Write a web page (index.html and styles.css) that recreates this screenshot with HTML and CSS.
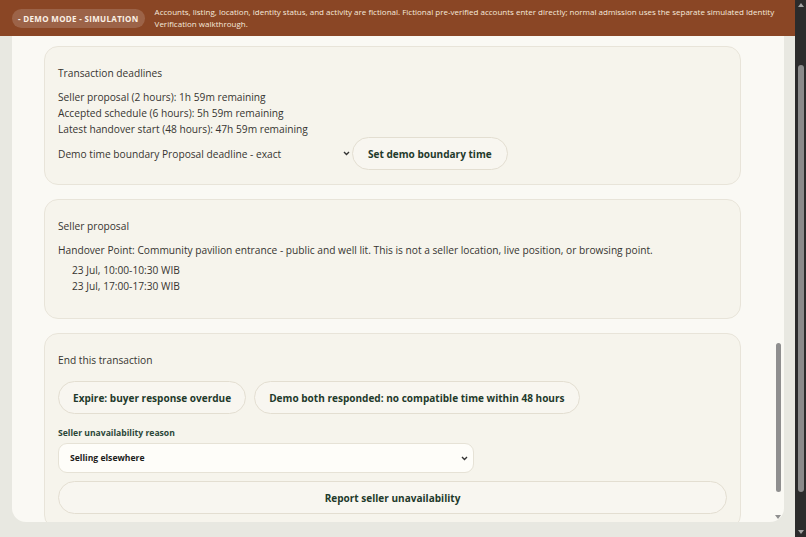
FILE: index.html
```html
<!DOCTYPE html>
<html lang="en">
<head>
    <meta charset="UTF-8">
    <meta name="viewport" content="width=device-width, initial-scale=1.0">
    <title>Transaction - Demo</title>
    <link rel="stylesheet" href="styles.css">
</head>
<body>

    <div class="page">
        <header class="demo-banner">
            <span class="demo-pill">- Demo mode - Simulation</span>
            <p class="demo-note">Accounts, listing, location, identity status, and activity are fictional. Fictional pre-verified accounts enter directly; normal admission uses the separate simulated Identity Verification walkthrough.</p>
        </header>

        <div class="stage">
            <main class="panel">
                <div class="panel-body">

                    <section class="card">
                        <h3 class="card-title">Transaction deadlines</h3>
                        <ul class="deadlines">
                            <li>Seller proposal (2 hours): 1h 59m remaining</li>
                            <li>Accepted schedule (6 hours): 5h 59m remaining</li>
                            <li>Latest handover start (48 hours): 47h 59m remaining</li>
                        </ul>
                        <div class="boundary-row">
                            <label class="boundary-label">Demo time boundary
                                <span class="select-wrap plain">
                                    <select class="boundary-select">
                                        <option>Proposal deadline - exact</option>
                                        <option>Proposal deadline - after</option>
                                    </select>
                                    <svg class="chevron" width="7" height="5" viewBox="0 0 7 5"><path d="M1 1l2.5 2.5L6 1" fill="none" stroke="#333" stroke-width="1.4"/></svg>
                                </span>
                            </label>
                            <button class="btn">Set demo boundary time</button>
                        </div>
                    </section>

                    <section class="card card-proposal">
                        <h3 class="card-title">Seller proposal</h3>
                        <p class="handover">Handover Point: Community pavilion entrance - public and well lit. This is not a seller location, live position, or browsing point.</p>
                        <ul class="slots">
                            <li>23 Jul, 10:00-10:30 WIB</li>
                            <li>23 Jul, 17:00-17:30 WIB</li>
                        </ul>
                    </section>

                    <section class="card">
                        <h3 class="card-title title-end">End this transaction</h3>
                        <div class="actions">
                            <button class="btn">Expire: buyer response overdue</button>
                            <button class="btn">Demo both responded: no compatible time within 48 hours</button>
                        </div>
                        <label class="field-label" for="reason">Seller unavailability reason</label>
                        <span class="select-wrap boxed">
                            <select id="reason" class="reason-select">
                                <option>Selling elsewhere</option>
                                <option>Item no longer available</option>
                            </select>
                            <svg class="chevron" width="7" height="5" viewBox="0 0 7 5"><path d="M1 1l2.5 2.5L6 1" fill="none" stroke="#333" stroke-width="1.4"/></svg>
                        </span>
                        <button class="btn btn-wide">Report seller unavailability</button>
                    </section>

                </div>
                <div class="inner-scroll">
                    <div class="inner-thumb"></div>
                    <span class="arrow-down light"></span>
                </div>
            </main>
        </div>
    </div>

    <div class="outer-scroll">
        <span class="arrow-up"></span>
        <div class="outer-thumb"></div>
        <span class="arrow-down"></span>
    </div>

</body>
</html>
```

FILE: styles.css
```css
* {
    margin: 0;
    padding: 0;
    box-sizing: border-box;
}

body, html {
    width: 100%;
    height: 100%;
    overflow: hidden;
}

body {
    display: flex;
    font-family: 'Open Sans', 'Noto Sans', sans-serif;
    font-size: 10.2px;
    line-height: 16px;
    color: #363531;
    background: #e8e8e1;
}

.page {
    flex: 1;
    display: flex;
    flex-direction: column;
    min-width: 0;
}

/* demo banner */
.demo-banner {
    height: 36px;
    flex-shrink: 0;
    display: flex;
    align-items: center;
    gap: 10px;
    padding: 0 14px 0 12px;
    background: #8a4625;
    color: #f6e9dc;
}

.demo-pill {
    flex-shrink: 0;
    padding: 3px 6px;
    border-radius: 999px;
    background: rgba(255, 255, 255, 0.16);
    font-size: 8px;
    line-height: 13px;
    font-weight: 700;
    letter-spacing: 0.04em;
    text-transform: uppercase;
    color: #fbf1e6;
}

.demo-note {
    font-size: 8px;
    line-height: 12px;
}

/* panel */
.stage {
    flex: 1;
    display: flex;
    padding: 0 11px 15px 12px;
    min-height: 0;
}

.panel {
    flex: 1;
    display: flex;
    overflow: hidden;
    background: #faf9f4;
    border-radius: 0 0 14px 14px;
}

.panel-body {
    flex: 1;
    display: flex;
    flex-direction: column;
    gap: 14px;
    padding: 10px 31px 0 32px;
    min-width: 0;
}

.card {
    flex-shrink: 0;
    padding: 18px 13px 14px;
    background: #f6f4ec;
    border: 1px solid #e8e4d9;
    border-radius: 14px;
}

.card-title {
    font-size: 10.2px;
    font-weight: 400;
    margin-bottom: 8px;
}

.title-end {
    margin-bottom: 13px;
}

ul {
    list-style: none;
}

.boundary-row {
    display: flex;
    align-items: center;
}

.select-wrap {
    position: relative;
    display: inline-flex;
    align-items: center;
}

.select-wrap select {
    appearance: none;
    border: none;
    background: transparent;
    font: inherit;
    color: inherit;
    outline: none;
}

.select-wrap .chevron {
    position: absolute;
    right: 6px;
    pointer-events: none;
}

.boundary-select {
    width: 189px;
    padding: 0 12px 0 0;
}

.plain .chevron {
    right: 1px;
}

.btn {
    height: 33px;
    padding: 0 14px;
    border: 1px solid #e3ded1;
    border-radius: 999px;
    background: #f8f6f0;
    font-family: inherit;
    font-size: 10.05px;
    font-weight: 700;
    color: #1f3a2b;
}

.boundary-row .btn {
    margin-left: 1px;
    padding: 0 15px;
}

.card-proposal {
    padding-bottom: 24px;
}

.handover {
    margin-bottom: 4px;
}

.slots {
    padding-left: 14px;
}

.actions {
    display: flex;
    gap: 8px;
}

.field-label {
    display: block;
    margin-top: 12px;
    font-size: 8.6px;
    line-height: 14px;
    font-weight: 700;
    color: #2c4738;
}

.boxed {
    display: flex;
    width: 416px;
    margin-top: 3px;
}

.reason-select {
    width: 100%;
    height: 30px;
    padding: 0 11px;
    border: 1px solid #e6e2d6 !important;
    border-radius: 9px;
    background: #fefdf9 !important;
    font-size: 8.6px !important;
    font-weight: 700 !important;
    color: #1c1c1a !important;
}

.btn-wide {
    display: block;
    width: 100%;
    margin-top: 8px;
}

/* scrollbars */
.inner-scroll {
    width: 12px;
    flex-shrink: 0;
    display: flex;
    flex-direction: column;
    align-items: center;
    padding-bottom: 3px;
}

.inner-thumb {
    width: 5px;
    height: 149px;
    margin-top: 307px;
    border-radius: 3px;
    background: #8f8f8f;
}

.inner-scroll .arrow-down {
    margin-top: auto;
}

.outer-scroll {
    width: 11px;
    flex-shrink: 0;
    display: flex;
    flex-direction: column;
    align-items: center;
    padding: 3px 0;
    background: #2b2b2b;
}

.outer-thumb {
    width: 6px;
    height: 427px;
    margin-top: 58px;
    border-radius: 3px;
    background: #8a8a8a;
}

.outer-scroll .arrow-down {
    margin-top: auto;
}

.arrow-up, .arrow-down {
    width: 0;
    height: 0;
    border-left: 3px solid transparent;
    border-right: 3px solid transparent;
}

.arrow-up {
    border-bottom: 4px solid #a3a3a3;
}

.arrow-down {
    border-top: 4px solid #a3a3a3;
}

.arrow-down.light {
    border-top-color: #8f8f8f;
}
```
